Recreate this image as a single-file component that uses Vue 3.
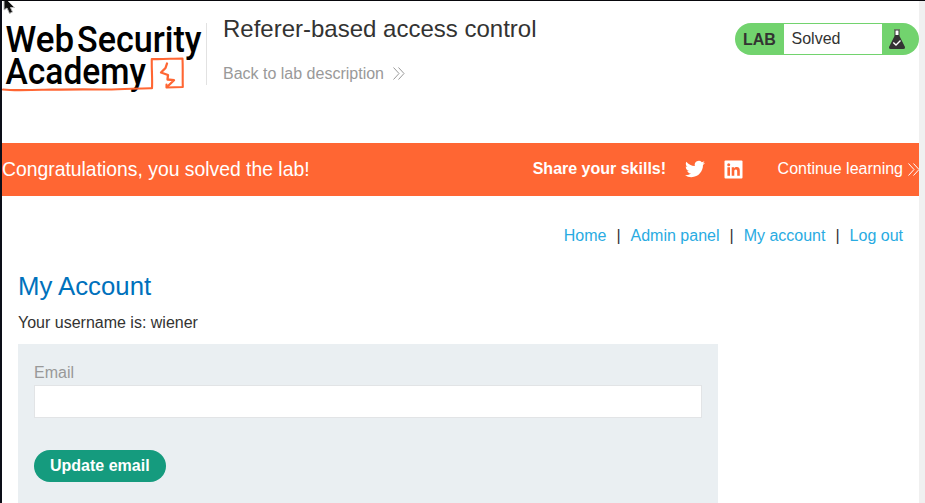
<script setup>
import { ref } from 'vue'

const email = ref('')
const links = ['Home', 'Admin panel', 'My account', 'Log out']
</script>

<template>
  <div class="window">
    <svg class="cursor" viewBox="0 0 13 15" width="13" height="15">
      <path d="M1 0V10L4 8L6.5 13.5L9.5 12L7.5 7.5H11.5L4 0Z" fill="#111" stroke="#bbb" stroke-width="1" />
    </svg>
    <main class="page">
      <header class="header">
        <svg class="logo" viewBox="0 0 202 96" width="202" height="96" role="img">
          <g class="logo-text">
            <text x="3.500" y="50.500" textLength="68.500" lengthAdjust="spacingAndGlyphs">Web</text>
            <text x="75" y="50.500" textLength="124.500" lengthAdjust="spacingAndGlyphs">Security</text>
            <text x="3.500" y="83" textLength="140.500" lengthAdjust="spacingAndGlyphs">Academy</text>
          </g>
          <g fill="none" stroke="#ff6633" stroke-linejoin="round" stroke-linecap="round">
            <path d="M1 88.500C12 89.800 25 89 40 88.800S76 88 98 88.500S135 87 150 87.200C150.500 77 149.500 67 149.800 58C160 58.500 170 57.500 180.500 57.500C181 67 180.500 76 180.800 86L164.500 86.500L164.500 83.500" stroke-width="2.100" />
            <path d="M165 62.500L163.500 67L159 71.500L166 74L165.500 78.500L172 79.200L165 86" stroke-width="2.300" />
          </g>
        </svg>
        <div class="divider"></div>
        <div class="title">
          <h2>Referer-based access control</h2>
          <a class="back"><span>Back to lab description</span>
            <svg viewBox="0 0 12 13" width="12" height="13"><path d="M.5 .5L6 6.500L.5 12.500M5.500 .5L11 6.500L5.500 12.500" /></svg>
          </a>
        </div>
        <div class="status">
          <strong>LAB</strong>
          <span>Solved</span>
          <svg viewBox="0 0 18 22" width="18" height="22">
            <path d="M6.500 2H11.500V8L17 19Q17.500 21 15.500 21H2.500Q.5 21 1 19L6.500 8Z" fill="#333" />
            <path d="M7.500 2.500H10.500V7H7.500Z" fill="#fff" />
            <path d="M6 1.500H12" stroke="#66795f" />
            <path d="M5.300 14.500L8 17L12.500 12.500" fill="none" stroke="#fff" stroke-width="1.400" />
          </svg>
        </div>
      </header>

      <section class="banner">
        <h4>Congratulations, you solved the lab!</h4>
        <div class="share">
          <strong>Share your skills!</strong>
          <svg class="twitter" viewBox="0 0 24 24" width="20" height="20">
            <path fill="#fff" d="M23.953 4.570a10 10 0 01-2.825.775 4.958 4.958 0 002.163-2.723c-.951.555-2.005.959-3.127 1.184a4.920 4.920 0 00-8.384 4.482C7.690 8.095 4.067 6.130 1.640 3.162a4.822 4.822 0 00-.666 2.475c0 1.710.870 3.213 2.188 4.096a4.904 4.904 0 01-2.228-.616v.060a4.923 4.923 0 003.946 4.827 4.996 4.996 0 01-2.212.085 4.936 4.936 0 004.604 3.417 9.867 9.867 0 01-6.102 2.105c-.390 0-.779-.023-1.170-.067a13.995 13.995 0 007.557 2.209c9.053 0 13.998-7.496 13.998-13.985 0-.210 0-.420-.015-.630A9.935 9.935 0 0024 4.590z" />
          </svg>
          <svg class="linkedin" viewBox="0 0 19 19" width="19" height="19">
            <rect x=".5" y=".5" width="18" height="18" rx="1" fill="#fff" />
            <circle cx="4.700" cy="4.800" r="1.500" fill="#ff6633" />
            <path fill="#ff6633" d="M3.400 7.300H6V15.800H3.400ZM7.700 7.300H10.200V8.500C10.700 7.600 11.600 7.100 12.700 7.100C15.200 7.100 15.800 8.700 15.800 11V15.800H13.200V11.600C13.200 10.400 13.100 9.400 11.900 9.400C10.600 9.400 10.300 10.300 10.300 11.500V15.800H7.700Z" />
          </svg>
        </div>
        <a class="continue"><span>Continue learning</span>
          <svg viewBox="0 0 12 13" width="12" height="13"><path d="M.5 .5L6 6.500L.5 12.500M5.500 .5L11 6.500L5.500 12.500" /></svg>
        </a>
      </section>

      <nav class="nav">
        <template v-for="(link, i) in links" :key="link">
          <span v-if="i">|</span>
          <a>{{ link }}</a>
        </template>
      </nav>

      <section class="account">
        <h1>My Account</h1>
        <p>Your username is: wiener</p>
        <form class="form" @submit.prevent>
          <label for="email">Email</label>
          <input id="email" v-model="email" type="email">
          <button type="submit">Update email</button>
        </form>
      </section>
    </main>
    <div class="scrollbar"></div>
  </div>
</template>

<style>
body {
  margin: 0;
  overflow: hidden;
}
</style>

<style scoped>
.window {
  position: relative;
  box-sizing: border-box;
  display: flex;
  width: 925px;
  height: 503px;
  overflow: hidden;
  border-top: 1px solid #08080c;
  border-left: 2px solid #0c0e18;
  background: #fff;
  color: #333332;
  font: 16px/20px "Liberation Sans", Arial, sans-serif;
}
.cursor {
  position: absolute;
  top: -1px;
  left: 1px;
}
.page {
  width: 917px;
}
.scrollbar {
  flex: 1;
  background: #f0f0f0;
}
.header {
  display: flex;
  align-items: flex-start;
  height: 142px;
}
.logo {
  display: block;
  flex: none;
  overflow: visible;
}
.logo-text {
  fill: #000;
  font: 500 37px Roboto, sans-serif;
}
.divider {
  width: 1px;
  height: 62px;
  margin: 22px 16px 0 2px;
  background: #e2e2e2;
}
h1, h2, h4, p {
  margin: 0;
  font-weight: 400;
}
.title {
  flex: 1;
  padding-top: 13px;
}
h2 {
  font-size: 24px;
  line-height: 30px;
}
.back {
  display: flex;
  align-items: center;
  gap: 9px;
  margin-top: 18px;
  color: #999;
}
.back span {
  padding-top: 2px;
}
.back path,
.continue path {
  fill: none;
  stroke: currentColor;
  stroke-width: 1;
}
.status {
  box-sizing: border-box;
  display: flex;
  align-items: center;
  width: 184px;
  height: 32px;
  margin-top: 22px;
  padding: 1px 0;
  border-radius: 16px;
  background: #72d36e;
}
.status strong {
  box-sizing: border-box;
  width: 49px;
  padding: 1px 0 0 8px;
}
.status span {
  box-sizing: border-box;
  width: 98px;
  height: 30px;
  padding-left: 7.500px;
  background: #fff;
  line-height: 29px;
}
.status svg {
  margin-left: 6px;
}
.banner {
  display: flex;
  align-items: center;
  height: 53px;
  background: #ff6633;
  color: #fff;
}
h4 {
  flex: 1;
  padding-bottom: 2px;
  font-size: 19.350px;
}
.share {
  display: flex;
  align-items: center;
}
.share strong {
  padding-bottom: 1px;
}
.twitter {
  margin: 0 19px 1px 18.500px;
}
.continue {
  display: flex;
  align-items: center;
  gap: 4.500px;
  height: 20px;
  margin: 0 -.5px 1px 35px;
}
.nav {
  display: flex;
  justify-content: flex-end;
  gap: 10px;
  margin-top: 30px;
  padding-right: 16px;
}
.nav a {
  color: #29abe2;
}
.account {
  padding: 24px 0 0 16px;
}
h1 {
  color: #0071bc;
  font-size: 25.750px;
  line-height: 32px;
}
p {
  margin-top: 11px;
}
.form {
  box-sizing: border-box;
  display: flex;
  flex-direction: column;
  align-items: flex-start;
  width: 700px;
  height: 180px;
  margin-top: 11px;
  padding: 19px 16px;
  background: #eaeff2;
}
label {
  color: #999;
}
input {
  box-sizing: border-box;
  width: 668px;
  height: 33px;
  margin: 2px 0 32px;
  border: 1px solid #e2e4e6;
  border-radius: 0;
  background: #fff;
}
button {
  flex: none;
  height: 32px;
  padding: 0 16px;
  border: 0;
  border-radius: 16px;
  background: #159b7e;
  color: #fff;
  font: bold 16px "Liberation Sans", Arial, sans-serif;
}
</style>
